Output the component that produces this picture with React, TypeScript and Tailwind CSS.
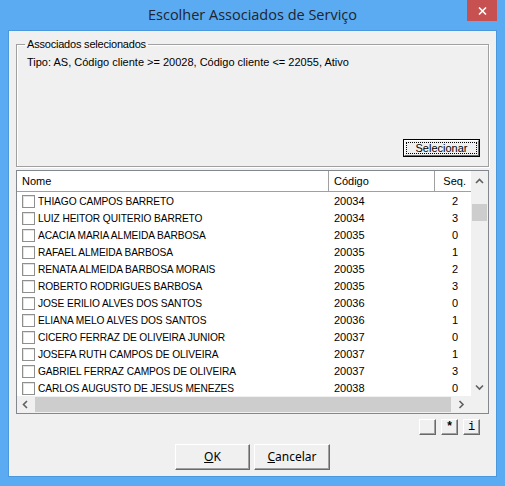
import React from 'react'

const rows: [string, string, string][] = [
  ['THIAGO CAMPOS BARRETO', '20034', '2'],
  ['LUIZ HEITOR QUITERIO BARRETO', '20034', '3'],
  ['ACACIA MARIA ALMEIDA BARBOSA', '20035', '0'],
  ['RAFAEL ALMEIDA BARBOSA', '20035', '1'],
  ['RENATA ALMEIDA BARBOSA MORAIS', '20035', '2'],
  ['ROBERTO RODRIGUES BARBOSA', '20035', '3'],
  ['JOSE ERILIO ALVES DOS SANTOS', '20036', '0'],
  ['ELIANA MELO ALVES DOS SANTOS', '20036', '1'],
  ['CICERO FERRAZ DE OLIVEIRA JUNIOR', '20037', '0'],
  ['JOSEFA RUTH CAMPOS DE OLIVEIRA', '20037', '1'],
  ['GABRIEL FERRAZ CAMPOS DE OLIVEIRA', '20037', '3'],
  ['CARLOS AUGUSTO DE JESUS MENEZES', '20038', '0'],
]

function Chevron({ dir }: { dir: 'up' | 'down' | 'left' | 'right' }) {
  const d = {
    up: 'M1 5 L4.5 1.5 L8 5',
    down: 'M1 1.5 L4.5 5 L8 1.5',
    left: 'M5 1 L1.5 4.5 L5 8',
    right: 'M1.5 1 L5 4.5 L1.5 8',
  }[dir]
  const vertical = dir === 'up' || dir === 'down'
  return (
    <svg width={vertical ? 9 : 7} height={vertical ? 7 : 9} viewBox={vertical ? '0 0 9 7' : '0 0 7 9'}>
      <path d={d} fill="none" stroke="#606060" strokeWidth="1.6" />
    </svg>
  )
}

function ClassicButton({ children, className }: { children: React.ReactNode; className: string }) {
  return (
    <div
      className={`flex items-center justify-center bg-[#F0F0F0] border border-t-white border-l-white border-r-[#696969] border-b-[#696969] shadow-[inset_-1px_-1px_0_#A0A0A0] ${className}`}
    >
      {children}
    </div>
  )
}

export default function App() {
  return (
    <div className="w-[505px] h-[486px] bg-[#5AABF2] flex flex-col font-['Liberation_Sans',sans-serif] text-[11px] text-black">
      {/* title bar */}
      <div className="relative h-[30px] flex items-center justify-center">
        <span className="font-['Open_Sans',sans-serif] text-[14.5px] text-[#1E2430] -mt-[1px]">
          Escolher Associados de Serviço
        </span>
        <div className="absolute right-[8px] top-0 w-[30px] h-[21px] bg-[#C75050] flex items-center justify-center">
          <svg width="9" height="8" viewBox="0 0 9 8">
            <path d="M1 0.5 L8 7.5 M8 0.5 L1 7.5" stroke="white" strokeWidth="1.6" />
          </svg>
        </div>
      </div>

      {/* client area */}
      <div className="ml-[8px] w-[489px] h-[447px] bg-[#F0F0F0] border border-[#4C98DE] px-[7px] pt-[7px] flex flex-col">
        <fieldset className="border border-[#A0A0A0] shadow-[inset_1px_1px_0_white,1px_1px_0_white] px-0">
          <legend className="ml-[8px] px-[2px] leading-[13px] tracking-[-0.2px]">Associados selecionados</legend>
          <div className="h-[115px] flex flex-col">
            <div className="pl-[10px] mt-[5px] leading-[13px]">
              Tipo: AS, Código cliente &gt;= 20028, Código cliente &lt;= 22055, Ativo
            </div>
            <div className="mt-auto mb-[9px] mr-[8px] self-end w-[77px] h-[18px] border border-black">
              <div className="w-full h-full flex bg-[#F0F0F0] border border-t-white border-l-white border-r-[#696969] border-b-[#696969] p-[1px]">
                <div className="flex-1 flex items-center justify-center border border-dotted border-black leading-[12px]">
                  Selecionar
                </div>
              </div>
            </div>
          </div>
        </fieldset>

        {/* list view */}
        <div className="mt-[3px] h-[244px] border border-[#828790] bg-white flex">
          <div className="w-[454px] flex flex-col">
            <div className="h-[21px] flex border-b border-[#A0A0A0] shrink-0">
              <div className="w-[312px] border-r border-[#A0A0A0] pl-[5px] flex items-center">Nome</div>
              <div className="w-[106px] border-r border-[#A0A0A0] pl-[5px] flex items-center">Código</div>
              <div className="w-[36px] pr-[5px] flex items-center justify-end">Seq.</div>
            </div>
            <div className="flex-1 overflow-hidden pt-[1px]">
              {rows.map(([name, code, seq]) => (
                <div key={name + seq} className="h-[17px] flex items-center">
                  <div className="w-[312px] flex items-center pl-[5px]">
                    <div className="w-[13px] h-[13px] border border-[#8E8F8F] bg-white shadow-[inset_1px_1px_0_#E3E3E3] shrink-0" />
                    <span className="ml-[3px] whitespace-nowrap text-[10.2px] tracking-[-0.1px]">{name}</span>
                  </div>
                  <div className="w-[106px] pl-[5px]">{code}</div>
                  <div className="w-[36px] pr-[13px] text-right">{seq}</div>
                </div>
              ))}
            </div>
            <div className="h-[17px] bg-[#F0F0F0] flex items-center shrink-0">
              <div className="w-[17px] flex items-center justify-center">
                <Chevron dir="left" />
              </div>
              <div className="ml-[1px] w-[416px] h-[15px] bg-[#CDCDCD]" />
              <div className="flex-1 flex items-center justify-center">
                <Chevron dir="right" />
              </div>
            </div>
          </div>
          <div className="w-[17px] flex flex-col bg-[#F0F0F0]">
            <div className="flex-1 flex flex-col">
              <div className="h-[17px] flex items-center justify-center pt-[4px]">
                <Chevron dir="up" />
              </div>
              <div className="mt-[16px] mx-[1px] h-[17px] bg-[#CDCDCD]" />
              <div className="mt-auto h-[17px] flex items-center justify-center">
                <Chevron dir="down" />
              </div>
            </div>
            <div className="h-[17px]" />
          </div>
        </div>

        {/* small buttons */}
        <div className="mt-[5px] mr-[9px] flex justify-end gap-[5px]">
          <ClassicButton className="w-[17px] h-[16px]">{''}</ClassicButton>
          <ClassicButton className="w-[17px] h-[16px] font-['Liberation_Mono',monospace] font-bold text-[12px]">
            *
          </ClassicButton>
          <ClassicButton className="w-[17px] h-[16px] font-['Liberation_Mono',monospace] text-[12px]">
            i
          </ClassicButton>
        </div>

        {/* OK / Cancel */}
        <div className="mt-[9px] flex justify-center gap-[4px] font-['Noto_Sans',sans-serif] text-[12px]">
          <ClassicButton className="w-[75px] h-[26px]">
            <span>
              <span className="underline">O</span>K
            </span>
          </ClassicButton>
          <ClassicButton className="w-[76px] h-[26px]">
            <span>
              <span className="underline">C</span>ancelar
            </span>
          </ClassicButton>
        </div>
      </div>
    </div>
  )
}
